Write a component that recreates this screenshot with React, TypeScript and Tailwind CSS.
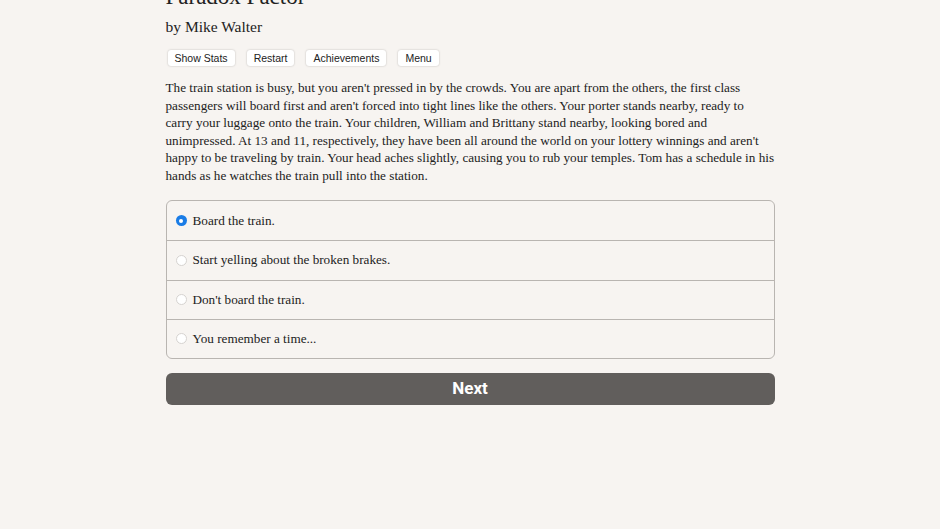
import { useState } from "react";

const choices = [
  "Board the train.",
  "Start yelling about the broken brakes.",
  "Don't board the train.",
  "You remember a time...",
];

const buttons = ["Show Stats", "Restart", "Achievements", "Menu"];

const story = [
  "The train station is busy, but you aren't pressed in by the crowds. You are apart from the others, the first class",
  "passengers will board first and aren't forced into tight lines like the others. Your porter stands nearby, ready to",
  "carry your luggage onto the train. Your children, William and Brittany stand nearby, looking bored and",
  "unimpressed. At 13 and 11, respectively, they have been all around the world on your lottery winnings and aren't",
  "happy to be traveling by train. Your head aches slightly, causing you to rub your temples. Tom has a schedule in his",
  "hands as he watches the train pull into the station.",
];

export default function App() {
  const [picked, setPicked] = useState(0);

  return (
    <div className="min-h-screen w-full overflow-hidden bg-[#f7f4f1] text-[#222]">
      <div className="mx-auto w-[609px] pb-24">
        {/* HEADER */}
        <h1 className="-mt-[17px] font-['Liberation_Serif',serif] text-[23px] leading-[28px] text-[#222]">
          Paradox Factor
        </h1>
        <div className="mt-[6px] font-['Liberation_Serif',serif] text-[15.5px] leading-[20px]">
          by Mike Walter
        </div>

        {/* TOOLBAR */}
        <div className="mt-[13px] flex gap-[12px] pl-[2px]">
          {buttons.map((b) => (
            <button
              key={b}
              className="h-[16px] rounded-[3px] bg-white px-[7px] font-['Liberation_Sans',sans-serif] text-[10.5px] leading-[16px] text-[#222] shadow-[0_0_2px_rgba(0,0,0,0.25)]"
            >
              {b}
            </button>
          ))}
        </div>

        {/* STORY */}
        <p className="mt-[13px] font-['Liberation_Serif',serif] text-[13.2px] leading-[17.5px] text-[#222]">
          {story.map((line) => (
            <span key={line} className="block whitespace-nowrap">
              {line}
            </span>
          ))}
        </p>

        {/* CHOICES */}
        <div className="mt-[16px] overflow-hidden rounded-[6px] border border-[#b9b5b1]">
          {choices.map((c, i) => (
            <label
              key={c}
              onClick={() => setPicked(i)}
              className={`flex h-[39.25px] cursor-pointer items-center gap-[6px] pl-[9px] font-['Liberation_Serif',serif] text-[13.2px] text-[#222] ${
                i > 0 ? "border-t border-[#b9b5b1]" : ""
              }`}
            >
              {picked === i ? (
                <span className="flex h-[11px] w-[11px] items-center justify-center rounded-full bg-[#1a7ce6]">
                  <span className="h-[4px] w-[4px] rounded-full bg-white" />
                </span>
              ) : (
                <span className="h-[11px] w-[11px] rounded-full border border-[#d6d3d0] bg-white" />
              )}
              {c}
            </label>
          ))}
        </div>

        {/* NEXT */}
        <button className="mt-[14px] h-[32px] w-full rounded-[6px] bg-[#615e5c] font-['Roboto',sans-serif] text-[17px] font-bold text-white">
          Next
        </button>
      </div>
    </div>
  );
}
